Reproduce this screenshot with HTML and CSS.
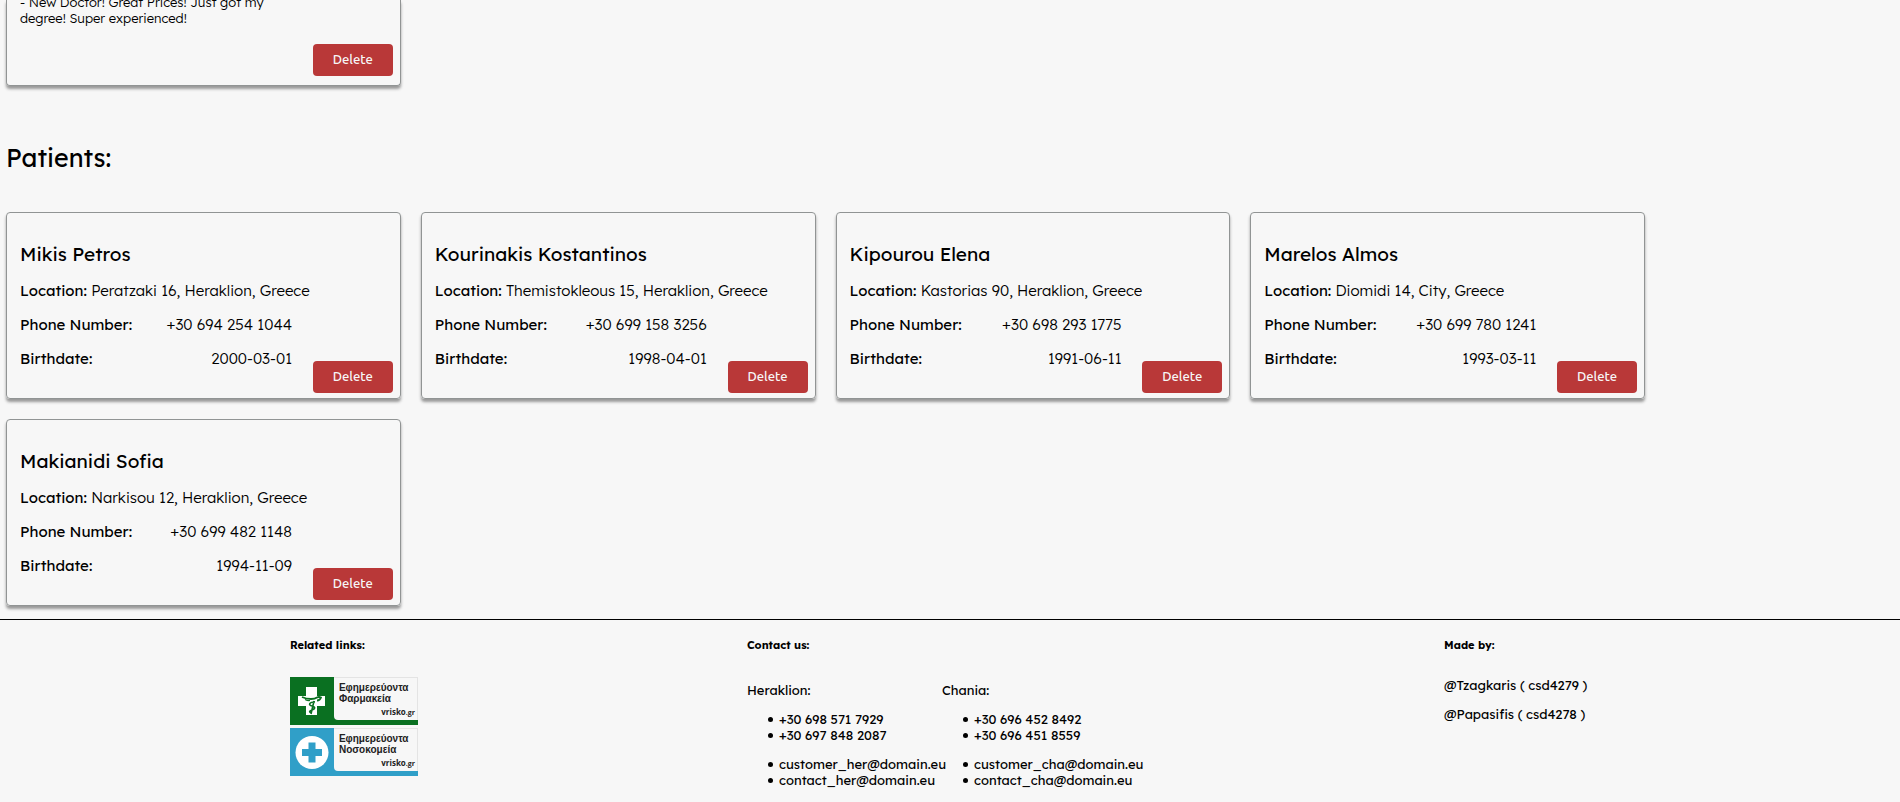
FILE: index.html
```html
<!DOCTYPE html>
<html lang="en">
<head>
<meta charset="utf-8">
<title>Administration</title>
<link rel="stylesheet" href="styles.css">
</head>
<body>
<main class="content">
  <section class="cards">
    <article class="card card-doctor">
      <p class="about">- New Doctor! Great Prices! Just got my<br>degree! Super experienced!</p>
      <button class="delete" type="button">Delete</button>
    </article>
  </section>

  <h1 class="section-title">Patients:</h1>

  <section class="cards">
    <article class="card">
      <h2 class="name">Mikis Petros</h2>
      <p class="location"><b>Location:</b> Peratzaki 16, Heraklion, Greece</p>
      <div class="card-bottom">
        <dl class="facts"><dt>Phone Number:</dt><dd>+30 694 254 1044</dd><dt>Birthdate:</dt><dd>2000-03-01</dd></dl>
        <button class="delete" type="button">Delete</button>
      </div>
    </article>
    <article class="card">
      <h2 class="name">Kourinakis Kostantinos</h2>
      <p class="location"><b>Location:</b> Themistokleous 15, Heraklion, Greece</p>
      <div class="card-bottom">
        <dl class="facts"><dt>Phone Number:</dt><dd>+30 699 158 3256</dd><dt>Birthdate:</dt><dd>1998-04-01</dd></dl>
        <button class="delete" type="button">Delete</button>
      </div>
    </article>
    <article class="card">
      <h2 class="name">Kipourou Elena</h2>
      <p class="location"><b>Location:</b> Kastorias 90, Heraklion, Greece</p>
      <div class="card-bottom">
        <dl class="facts"><dt>Phone Number:</dt><dd>+30 698 293 1775</dd><dt>Birthdate:</dt><dd>1991-06-11</dd></dl>
        <button class="delete" type="button">Delete</button>
      </div>
    </article>
    <article class="card">
      <h2 class="name">Marelos Almos</h2>
      <p class="location"><b>Location:</b> Diomidi 14, City, Greece</p>
      <div class="card-bottom">
        <dl class="facts"><dt>Phone Number:</dt><dd>+30 699 780 1241</dd><dt>Birthdate:</dt><dd>1993-03-11</dd></dl>
        <button class="delete" type="button">Delete</button>
      </div>
    </article>
    <article class="card">
      <h2 class="name">Makianidi Sofia</h2>
      <p class="location"><b>Location:</b> Narkisou 12, Heraklion, Greece</p>
      <div class="card-bottom">
        <dl class="facts"><dt>Phone Number:</dt><dd>+30 699 482 1148</dd><dt>Birthdate:</dt><dd>1994-11-09</dd></dl>
        <button class="delete" type="button">Delete</button>
      </div>
    </article>
  </section>
</main>

<footer class="footer">
  <section>
    <h3 class="footer-title">Related links:</h3>
    <div class="banners">
      <a class="banner banner-pharmacy" href="#">
        <svg class="banner-icon" viewBox="0 0 44 48" aria-hidden="true">
          <path fill="#fff" d="M16 10h11v9h8v10h-8v9H16v-9H8V19h8z"/>
          <g fill="none" stroke="#0a7021">
            <path stroke-width="1.8" d="M12 20q4 2 9 2 4 0 6-1.500 2-1 4 0-1 3-4 3"/>
            <path stroke-width="1.200" d="M15 22.500q3 1.500 5 1"/>
            <path stroke-width="1.600" d="M25 25c-6 0-7 3-3 4s3 3 0 4-3 2-1 3M24 24l-3 13"/>
          </g>
        </svg>
        <span class="banner-text">Εφημερεύοντα<br>Φαρμακεία<span class="brand">vrisko<small>.gr</small></span></span>
      </a>
      <a class="banner banner-hospital" href="#">
        <svg class="banner-icon" viewBox="0 0 44 48" aria-hidden="true">
          <circle cx="22" cy="24.500" r="16.500" fill="#fff"/>
          <path fill="#309fc8" d="M18.500 14.500h7V21H32v7h-6.500v6.500h-7V28H12v-7h6.500z"/>
        </svg>
        <span class="banner-text">Εφημερεύοντα<br>Νοσοκομεία<span class="brand">vrisko<small>.gr</small></span></span>
      </a>
    </div>
  </section>
  <section>
    <h3 class="footer-title">Contact us:</h3>
    <div class="offices">
      <div class="office">
        <p class="city">Heraklion:</p>
        <ul class="contacts"><li>+30 698 571 7929</li><li>+30 697 848 2087</li></ul>
        <ul class="contacts"><li>customer_her@domain.eu</li><li>contact_her@domain.eu</li></ul>
      </div>
      <div class="office">
        <p class="city">Chania:</p>
        <ul class="contacts"><li>+30 696 452 8492</li><li>+30 696 451 8559</li></ul>
        <ul class="contacts"><li>customer_cha@domain.eu</li><li>contact_cha@domain.eu</li></ul>
      </div>
    </div>
  </section>
  <section>
    <h3 class="footer-title">Made by:</h3>
    <p class="author">@Tzagkaris ( csd4279 )</p>
    <p class="author">@Papasifis ( csd4278 )</p>
  </section>
</footer>
</body>
</html>
```
FILE: styles.css
```css
* { box-sizing: border-box; }

body {
  margin: 0;
  background: #f7f7f7;
  color: #000;
  font-family: "Lexend Deca", Lexend, Inter, "Liberation Sans", sans-serif;
}

h1, h2, h3, p, ul, dl, dd { margin: 0; padding: 0; }

.content { padding: 0 6px 13px; }

.cards {
  display: flex;
  flex-wrap: wrap;
  gap: 20px;
}

.card {
  width: 20.91%;
  display: flex;
  flex-direction: column;
  padding: 21px 7px 5px 13px;
  border: 1px solid #919494;
  border-radius: 4px;
  box-shadow: 0 3px 3px #999;
}

.card-doctor {
  padding-top: 0;
  padding-bottom: 9px;
  border-top: 0;
  border-radius: 0 0 4px 4px;
}

.about {
  margin-top: -6px;
  font-size: 13px;
  line-height: 16px;
  font-weight: 300;
}

.card-doctor .delete { margin-top: 18px; }

.section-title {
  padding: 52px 0 34px;
  font-size: 25px;
  line-height: 40px;
  font-weight: 400;
}

.name {
  font-size: 19px;
  line-height: 40px;
  font-weight: 400;
}

.location {
  font-size: 15px;
  line-height: 34px;
  font-weight: 300;
  white-space: nowrap;
}

.location b, .facts dt { font-weight: 400; }

.card-bottom {
  display: flex;
  height: 85px;
  justify-content: space-between;
}

.facts {
  width: 272px;
  display: grid;
  grid-template-columns: auto auto;
  grid-auto-rows: 34px;
  font-size: 15px;
  line-height: 34px;
}

.facts dd { text-align: right; font-weight: 300; }

.delete {
  width: 80px;
  height: 32px;
  align-self: flex-end;
  padding: 0 0 2px;
  border: 0;
  border-radius: 4px;
  background: #b93838;
  color: #f7f7f7;
  font-family: Ubuntu, "Noto Sans", sans-serif;
  font-size: 13px;
  font-weight: 500;
}

.footer {
  display: grid;
  grid-template-columns: 457fr 697fr 456fr;
  padding: 17px 0 0 15.26%;
  border-top: 1px solid #000;
  font-size: 13px;
}

.footer-title {
  font-size: 11px;
  line-height: 16px;
  font-weight: 700;
}

.banners {
  display: flex;
  flex-direction: column;
  gap: 3px;
  margin-top: 24px;
}

.banner {
  display: flex;
  width: 128px;
  height: 48px;
  color: #222;
  text-decoration: none;
}

.banner-pharmacy { background: #0a7021; }
.banner-hospital { background: #309fc8; }
.banner-icon { width: 44px; height: 48px; }

.banner-text {
  display: block;
  width: 84px;
  height: 43px;
  padding: 4px 2px 0 5px;
  border: 1px solid #e4e4e4;
  border-width: 1px 1px 0 0;
  border-bottom-left-radius: 4px;
  background: #f7f7f7;
  font: 700 10px/11px "Liberation Sans", sans-serif;
}

.brand {
  display: block;
  padding-top: 2px;
  text-align: right;
  font-family: "Open Sans", sans-serif;
  font-size: 8px;
}

.brand small { font-size: 7px; }

.offices {
  display: flex;
  padding-top: 29px;
}

.office { width: 195px; }

.city { line-height: 16px; margin-bottom: 13px; }

.contacts {
  padding-left: 21px;
  margin-bottom: 13px;
  line-height: 16px;
  list-style: none;
}

.contacts li {
  display: flex;
  align-items: center;
  gap: 6px;
  white-space: nowrap;
}

.contacts li::before {
  content: "";
  flex: none;
  width: 5px;
  height: 5px;
  border-radius: 50%;
  background: #000;
}

.author { line-height: 16px; margin-top: 13px; }
.footer-title + .author { margin-top: 24px; }
```
